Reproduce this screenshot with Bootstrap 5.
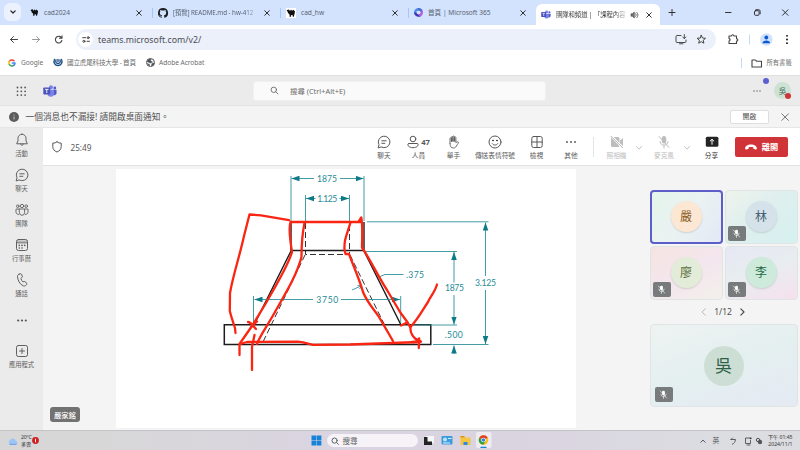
<!DOCTYPE html>
<html lang="zh-Hant">
<head>
<meta charset="utf-8">
<meta name="viewport" content="width=device-width, initial-scale=1">
<title>Microsoft Teams</title>
<link href="https://cdn.jsdelivr.net/npm/bootstrap@5.3.0/dist/css/bootstrap.min.css" rel="stylesheet">
<style>
body{width:800px;height:450px;overflow:hidden;font-family:"Noto Sans","Noto Sans CJK TC",sans-serif;font-size:6.6px;line-height:10px;color:#505050;background:#fff;white-space:nowrap}
svg{display:block;flex:none;overflow:visible}
.ln{fill:none;stroke:currentColor;stroke-linecap:round;stroke-linejoin:round}
.fx{flex:none}
.tabstrip{height:25px;background:#d3e2fd}
.tabdrop{width:17px;height:18px;margin:3px 2px 0 4px;border-radius:6px;background:#ebf2fe;color:#222}
.btab{width:128px;height:25px;padding-left:7px;border-right:1px solid transparent;color:#596273}
.btab .ttl{width:84px;margin-left:5px}
.btab .ttl.tight{font-size:6.25px;letter-spacing:-.05px}
.btab .tx{margin-left:7px;color:#333}
.tsep{width:1px;height:10px;background:#a5c7f7;margin-left:9px}
.fade-r{-webkit-mask-image:linear-gradient(90deg,#000 85%,#0003);mask-image:linear-gradient(90deg,#000 85%,#0003)}
.btab.on{width:124px;height:21px;margin:4px 0 0 1px;padding-left:5px;background:#fff;border-radius:6px 6px 0 0;color:#444}
.btab.on .ttl{width:70px;font-size:6.4px;letter-spacing:-.1px}
.tbar{height:29px;color:#444}
.urlbar{width:640px;height:21px;margin-left:8px;border-radius:11px;background:#ebf0fa}
.urlchip{width:15px;height:15px;border-radius:50%;background:#fff;margin-left:2px}
.urltx{font-size:8.8px;margin-left:5px;color:#4b4f54;width:572px}
.bmarks{height:21px;color:#6c6c6c}
.thead{height:31px;background:#ebebeb;border-top:1px solid #e0e0e0;border-bottom:1px solid #e2e2e2}
.sbox{width:293px;height:20px;background:#fafafa;border-radius:3px;border:1px solid #f0f0f0;font-size:7.4px;color:#6c6c6c}
.note{height:22px;background:#f4f4f4;border-bottom:1px solid #e6e6e6;font-size:8.7px;color:#505050}
.openb{width:39px;height:14px;background:#fff;border:1px solid #dedede;border-radius:2px;font-size:6.9px}
.rail{width:43px;background:#ebebeb;color:#606060;font-size:6.3px}
.rail .ri{height:35px;padding-top:5px}
.rail .rl{line-height:9px;margin-top:2px}
.mbar{height:38px;background:#fff;border-bottom:1px solid #e2e2e2;color:#585858}
.mi{height:38px;padding-top:7px}
.mi .ic{height:14px}
.mi .lb{line-height:9px;margin-top:2px;font-size:6.7px}
.off{color:#bdbdbd}
.leave{width:53px;height:20px;background:#d13438;border-radius:2px;color:#fff;font-weight:700;font-size:8.2px}
.stage{background:#f4f4f4}
.slide{width:460px;height:259px;background:#fff;margin-top:3px}
.speaker{width:30px;height:15px;margin:241px 36px 0 7px;background:#727272;border-radius:3px;color:#fff;font-weight:500;font-size:7.3px}
.people{width:148px;margin:23.5px 0 0 73.5px}
.tile{width:73px;height:54px;border:1px solid #dfe5e5;border-radius:4px;position:relative}
.av{border-radius:50%;width:31px;height:31px;font-size:12px;box-shadow:0 1px 2px #0002}
.mic{position:absolute;left:2px;bottom:2px;width:18px;height:15px;background:#777b7b;border-radius:2px;color:#fff}
.t1{background:linear-gradient(125deg,#e4f5ec,#ebf2f2 50%,#e3e9f6);border:2px solid #5b5fc7}
.t2{background:linear-gradient(140deg,#eff3ec,#deefee 45%,#d6f1f1)}
.t3{background:linear-gradient(150deg,#f5e4e0,#f3e6ee 50%,#f3f0ea)}
.t4{background:linear-gradient(160deg,#e6e7f4,#e8edf0 45%,#f5e1ee)}
.t5{width:148px;height:83px;background:linear-gradient(160deg,#eef3f1,#e4eff0 50%,#e5eaf3)}
.t5 .mic{left:4px;bottom:4px}
.tkbar{height:20px;border-top:1px solid #c4c4c8;background:linear-gradient(90deg,#d7d7d7 10%,#dad4e2 45%,#dad4e0 65%,#dbdde1 90%)}
.tksearch{width:91px;height:13px;border-radius:7px;background:#f5f2f8;font-size:7.6px;color:#606060}
.dot-n{position:absolute;border-radius:50%;width:6px;height:6px}
.tiny{font-size:5.1px;line-height:7px;color:#333}
</style>
<script src="https://cdn.jsdelivr.net/npm/bootstrap@5.3.0/dist/js/bootstrap.bundle.min.js"></script>
</head>
<body class="d-flex flex-column">
<svg width="0" height="0" class="position-absolute">
<symbol id="x" viewBox="0 0 8 8"><path class="ln" d="M1.700 1.700l4.600 4.600M6.300 1.700L1.700 6.300"/></symbol>
<symbol id="camel" viewBox="0 0 10 10"><path d="M1 2l2-.6L4 3l1-1.600 1 1.300 1.400-1L9 3.500 8.500 6l-.7 2.700h-1L6.500 7 5 7.200 4.700 9h-1L3.500 6.500 2 5 1.600 3.500.8 3z" fill="#111"/></symbol>
<symbol id="teams" viewBox="0 0 14 12"><circle cx="8" cy="2.300" r="2" fill="#7b83eb"/><circle cx="11.800" cy="3" r="1.400" fill="#5059c9"/><path d="M10 4.800h3.500v3.400a2.200 2.200 0 0 1-3.500 1.500z" fill="#5059c9"/><path d="M4.500 4.800h6.500v3.700a3.200 3.200 0 0 1-6.500 0z" fill="#7b83eb"/><rect x=".3" y="2.500" width="7" height="7" rx=".8" fill="#4b53bc"/><path d="M2.100 4.400h3.400M3.800 4.400v3.700" stroke="#fff" stroke-width=".9"/></symbol>
<symbol id="micoff" viewBox="0 0 14 14"><rect x="4.800" y="1" width="4.400" height="7.500" rx="2.200" fill="currentColor"/><path class="ln" d="M3 6.500c0 5 8 5 8 0M7 10.300V13M2 1.500l10 11" stroke-width="1"/></symbol>
<symbol id="chat" viewBox="0 0 14 14"><path class="ln" d="M1.200 12.600l.8-2.900A5.800 5.800 0 1 1 4.400 12.100zM4.800 5.800h4.400M4.800 8.300h3" stroke-width="1"/></symbol>
</svg>

<div class="tabstrip d-flex align-items-center fx">
  <div class="tabdrop fx d-flex align-items-center justify-content-center align-self-start"><svg width="6" height="4"><path class="ln" d="M.8.8L3 3 5.200.8" stroke-width="1.200"/></svg></div>
  <div class="btab d-flex align-items-center fx"><svg width="9" height="9"><use href="#camel"/></svg><div class="ttl fx">cad2024</div><svg class="tx" width="8" height="8"><use href="#x"/></svg><div class="tsep fx"></div></div>
  <div class="btab d-flex align-items-center fx"><svg width="10" height="10" viewBox="0 0 16 16"><path fill="#1b1f24" d="M8 0a8 8 0 0 0-2.500 15.600c.4.1.5-.2.500-.4v-1.500c-2 .4-2.600-.5-2.800-1-.1-.2-.5-.9-.8-1.100-.3-.2-.7-.5 0-.5.600 0 1.100.6 1.200.8.700 1.200 1.900.9 2.400.7.100-.5.300-.9.500-1.100-1.800-.2-3.600-.9-3.600-4 0-.9.300-1.600.8-2.100-.1-.2-.4-1 .1-2.100 0 0 .7-.2 2.200.8a7.600 7.600 0 0 1 4 0c1.500-1 2.200-.8 2.200-.8.400 1.100.2 1.900.1 2.100.5.600.8 1.300.8 2.100 0 3.100-1.900 3.800-3.700 4 .3.300.6.7.6 1.500v2.200c0 .2.100.5.600.4A8 8 0 0 0 8 0z"/></svg><div class="ttl tight fade-r fx">[預覽] README.md - hw-412</div><svg class="tx" width="8" height="8" style="margin-left:6px"><use href="#x"/></svg><div class="tsep fx"></div></div>
  <div class="btab d-flex align-items-center fx"><svg width="10" height="10"><rect width="10" height="10" fill="#fff"/><use href="#camel"/></svg><div class="ttl fx">cad_hw</div><svg class="tx" width="8" height="8" style="margin-left:6px"><use href="#x"/></svg><div class="tsep fx"></div></div>
  <div class="btab d-flex align-items-center fx"><svg width="9" height="9"><path class="ln" d="M4.500 1.200A3.300 3.300 0 0 0 1.300 5.500" style="stroke:#4a8fe8" stroke-width="2.400"/><path class="ln" style="stroke:#4536b8" stroke-width="2.400" d="M1.500 5.500a3.300 3.300 0 0 0 4.500 1.800"/><path class="ln" style="stroke:#b45fe0" stroke-width="2.400" d="M6.200 7.200a3.300 3.300 0 0 0 1-4.800"/><path class="ln" style="stroke:#4b6cd8" stroke-width="2.400" d="M7 2.300a3.300 3.300 0 0 0-2.300-1"/></svg><div class="ttl fx">首頁 | Microsoft 365</div><svg class="tx" width="8" height="8"><use href="#x"/></svg></div>
  <div class="btab on d-flex align-items-center fx"><svg width="10" height="9"><use href="#teams"/></svg><div class="ttl fade-r fx">團隊和頻道 | 「課程內容</div><svg width="9" height="8" style="margin-left:4px"><path d="M1 2.800h1.300L4.300 1v6L2.300 5.200H1z" fill="#777" stroke="#444" stroke-width=".6"/><path class="ln" d="M5.600 2.600c.8.800.8 2 0 2.800M6.600 1.200c1.800 1.500 1.800 4.100 0 5.600" stroke-width=".8"/></svg><svg class="tx" width="8" height="8" style="margin-left:6px"><use href="#x"/></svg></div>
  <svg width="140" height="25" viewBox="660 0 140 25" style="color:#333"><path class="ln" d="M669 12.500h6M672 9.500v6M725.500 12.500h5.500M782.500 9.800l5.500 5.500M788 9.800l-5.500 5.500"/><rect x="754.500" y="10.700" width="4.600" height="4.600" rx="1" class="ln"/><path class="ln" d="M756 9.600h2.500a1.700 1.700 0 0 1 1.700 1.700v2.500" stroke-width=".9"/></svg>
</div>

<div class="tbar d-flex align-items-center fx">
  <svg width="68" height="29" viewBox="0 25 68 29"><path class="ln" d="M10.500 39.500h7M13.500 36.500l-3 3 3 3"/><path class="ln" style="stroke:#999" d="M32.500 39.500h7M36.500 36.500l3 3-3 3"/><path class="ln" d="M61.600 38a3.300 3.300 0 1 0 .3 2.500M62 35.800v2.500h-2.500" stroke-width="1.100"/></svg>
  <div class="urlbar d-flex align-items-center fx">
    <div class="urlchip fx d-flex align-items-center justify-content-center"><svg width="8" height="7"><path class="ln" d="M.7 1.700h3M5 5.300h2.500"/><circle class="ln" cx="6.200" cy="1.700" r="1"/><circle class="ln" cx="1.900" cy="5.300" r="1"/></svg></div>
    <div class="urltx fx">teams.microsoft.com/v2/</div>
    <svg width="38" height="13" viewBox="670 33 38 13"><path class="ln" d="M681 35.500h-4a1 1 0 0 0-1 1v5a1 1 0 0 0 1 1h8a1 1 0 0 0 1-1V40M679.500 43.800h3.500M684.300 34.500v4M682.700 37l1.600 1.600 1.600-1.600" stroke-width=".95"/><path class="ln" d="M701.300 35.300l1.200 2.700 3 .3-2.300 2 .7 2.900-2.600-1.500-2.600 1.500.7-2.900-2.300-2 3-.3z"/></svg>
  </div>
  <svg width="84" height="29" viewBox="716 25 84 29"><path class="ln" d="M729 36h2.500c.2-1.600 2.200-1.600 2.400 0h2.600v2.700c1.800.2 1.800 2.200 0 2.400v2.400H729v-2.400c1.500-.3 1.500-2.200 0-2.500z" stroke-width="1.100"/><path d="M749.500 34.500v10" stroke="#c5daf8"/><circle cx="766.300" cy="39.500" r="6.200" fill="#cfe1fd"/><circle cx="766.300" cy="37.500" r="1.900" fill="#0b57d0"/><path d="M762.500 43.200c0-3.700 7.600-3.700 7.600 0z" fill="#0b57d0"/><circle cx="787" cy="35.800" r=".9"/><circle cx="787" cy="39.500" r=".9"/><circle cx="787" cy="43.200" r=".9"/></svg>
</div>

<div class="bmarks d-flex align-items-center fx pb-1">
  <svg width="8" height="8" viewBox="0 0 8 8" style="margin-left:8px"><g class="ln" stroke-width="1.500"><path style="stroke:#ea4335" d="M1.300 2.500A3 3 0 0 1 6 1.800"/><path style="stroke:#fbbc05" d="M1.300 2.500a3 3 0 0 0 0 3"/><path style="stroke:#34a853" d="M1.500 5.700a3 3 0 0 0 4.300.7"/><path style="stroke:#4285f4" d="M6 6.200c.7-.6 1-1.300 1-2.200H4.300"/></g></svg>
  <div class="fx" style="width:27px;margin-left:5px">Google</div>
  <svg width="10" height="9" style="margin-left:5px;color:#214f87"><path class="ln" d="M1.500 1.500c-1.500 3 .5 6 3.500 6s5-3 3.500-6M3 2c-.8 2 .3 3.500 2 3.500S7.800 4 7 2M5 1.500v2" stroke-width="1.400"/></svg>
  <div class="fx" style="width:73px;margin-left:4px;letter-spacing:-.2px">國立虎尾科技大學 - 首頁</div>
  <svg width="9" height="9" style="margin-left:6px"><circle cx="4.500" cy="4.500" r="4" fill="#fff" stroke="#4d5156"/><path d="M1 3.500L3 1l2 .3-.5 1.400L6.500 4 4.500 5 3 4.500zM5.500 8l.4-2.600L8.200 5 7.800 6.500zM1.500 5.500l2 1-.3 1.600z" fill="#4d5156" stroke="#4d5156" stroke-width=".5"/></svg>
  <div class="fx" style="margin-left:4px;width:582px;letter-spacing:-.04px">Adobe Acrobat</div>
  <svg width="21" height="12" viewBox="741 56 21 12"><path d="M741.500 57v10" stroke="#c5daf8"/><path class="ln" style="stroke:#444" d="M752 66v-7h3.500l1 1.200h5V66z" stroke-width="1.100"/></svg>
  <div class="fx" style="margin-left:4.500px;font-size:6.300px">所有書籤</div>
</div>

<div class="thead d-flex align-items-center fx">
  <svg width="58" height="12" viewBox="0 84 58 12"><g fill="#555"><circle cx="17.500" cy="86.500" r=".9"/><circle cx="21.300" cy="86.500" r=".9"/><circle cx="25.100" cy="86.500" r=".9"/><circle cx="17.500" cy="90.300" r=".9"/><circle cx="21.300" cy="90.300" r=".9"/><circle cx="25.100" cy="90.300" r=".9"/><circle cx="17.500" cy="94.100" r=".9"/><circle cx="21.300" cy="94.100" r=".9"/><circle cx="25.100" cy="94.100" r=".9"/></g><use href="#teams" x="43" y="84" width="14" height="12"/></svg>
  <div class="sbox d-flex align-items-center fx" style="margin-left:195px"><svg width="9" height="9" style="margin:0 11px 0 16px"><circle class="ln" cx="3.800" cy="3.800" r="2.700" stroke-width=".9"/><path class="ln" d="M5.800 5.800L8 8" stroke-width=".9"/></svg><span>搜尋 (Ctrl+Alt+E)</span></div>
  <svg width="10" height="4" style="margin-left:206px"><g fill="#777"><circle cx="2" cy="2" r=".8"/><circle cx="5" cy="2" r=".8"/><circle cx="8" cy="2" r=".8"/></g></svg>
  <div class="position-relative fx d-flex align-items-center justify-content-center rounded-circle" style="width:17px;height:17px;margin-left:12px;background:#cce2d5;color:#466b57;font-size:7.500px">吳<span class="dot-n" style="left:-11px;top:-4px;background:#5b5fd0"></span><span class="dot-n" style="right:0;bottom:0;background:#d13438"></span></div>
</div>

<div class="note d-flex align-items-center fx">
  <svg width="10" height="10" style="margin-left:8.500px"><circle cx="5" cy="5" r="5" fill="#5c5c5c"/><path d="M5 2.500v1M5 4.500v3" stroke="#ddd" stroke-width=".8"/></svg>
  <div class="fx" style="margin-left:7px;width:704.500px">一個消息也不漏接! 請開啟桌面通知。</div>
  <div class="openb fx d-flex align-items-center justify-content-center">開啟</div>
  <svg width="8" height="8" style="margin-left:12px;color:#666"><path class="ln" d="M.8.8l6.600 6.600M7.400.8L.8 7.400" stroke-width=".9"/></svg>
</div>

<div class="d-flex fx" style="height:302px">
  <nav class="rail fx d-flex flex-column text-center">
    <div class="ri d-flex flex-column align-items-center"><svg width="14" height="14"><path class="ln" d="M7 1.200a4 4 0 0 0-4 4v2.600L1.700 10.800h10.600L11 7.800V5.200a4 4 0 0 0-4-4zM5.500 11c.2 1.800 2.800 1.800 3 0"/></svg><div class="rl">活動</div></div>
    <div class="ri d-flex flex-column align-items-center"><svg width="14" height="14"><use href="#chat"/></svg><div class="rl">聊天</div></div>
    <div class="ri d-flex flex-column align-items-center"><svg width="14" height="14"><g class="ln" stroke-width=".9"><circle cx="7" cy="3" r="1.700"/><circle cx="2.800" cy="3.200" r="1.300"/><circle cx="11.200" cy="3.200" r="1.300"/><path d="M4.400 6h5.200v3.700a2.600 2.600 0 0 1-5.200 0zM4.200 6H1v3.200c0 1.300 1.200 2.300 2.600 2.200M9.800 6H13v3.200c0 1.300-1.200 2.300-2.600 2.200"/></g></svg><div class="rl">團隊</div></div>
    <div class="ri d-flex flex-column align-items-center"><svg width="14" height="14"><path d="M1.500 2.500h11v2.300h-11z" fill="#b5b5b5"/><rect class="ln" x="1.500" y="1.500" width="11" height="11" rx="2"/><path class="ln" d="M1.500 4.900h11" stroke-width=".8"/><g fill="#555"><circle cx="4.300" cy="7.400" r=".8"/><circle cx="7" cy="7.400" r=".8"/><circle cx="9.700" cy="7.400" r=".8"/><circle cx="4.300" cy="10" r=".8"/><circle cx="7" cy="10" r=".8"/></g></svg><div class="rl">行事曆</div></div>
    <div class="ri d-flex flex-column align-items-center"><svg width="14" height="14"><path class="ln" d="M4 1.200l1.500-.4c.7-.1 1 .3 1.200.8l.6 1.600c.2.600 0 1-.4 1.400l-1 .9c.2 1.200 1 2.500 2 3.400l1.400-.4c.6-.1 1 .1 1.300.5l1 1.300c.3.500.3 1-.1 1.400l-.9.900c-.6.500-1.400.6-2.200.3C4.800 11.400 2.600 7.300 2.500 3.200c0-.9.6-1.700 1.500-2z"/></svg><div class="rl">通話</div></div>
    <div class="ri d-flex flex-column align-items-center" style="padding-top:15px"><svg width="12" height="5"><g fill="#555"><circle cx="2.200" cy="2.500" r="1.100"/><circle cx="6" cy="2.500" r="1.100"/><circle cx="9.800" cy="2.500" r="1.100"/></g></svg></div>
    <div class="ri d-flex flex-column align-items-center" style="padding-top:6px"><svg width="14" height="14"><rect class="ln" x="1.500" y="1.500" width="11" height="11" rx="1.800"/><path class="ln" d="M4.500 7h5M7 4.500v5"/></svg><div class="rl">應用程式</div></div>
  </nav>
  <div class="d-flex flex-column flex-grow-1">
    <div class="mbar d-flex fx text-center">
      <svg width="10" height="12" style="margin:13px 0 0 9px"><path class="ln" d="M5 .8c1.200 1 2.500 1.300 4.200 1.300v3.500c0 2.700-1.600 4.400-4.200 5.400C2.400 10 .8 8.300.8 5.600V2.100C2.500 2.100 3.800 1.800 5 .8z"/></svg>
      <div class="fx text-start" style="width:296.500px;margin:15px 0 0 8.500px;font-size:8.200px">25:49</div>
      <div class="mi fx" style="width:34px"><div class="ic"><svg class="mx-auto" width="14" height="14"><use href="#chat"/></svg></div><div class="lb">聊天</div></div>
      <div class="mi fx" style="width:35px"><div class="ic d-flex justify-content-center align-items-center"><svg width="12" height="14"><circle class="ln" cx="6" cy="4" r="2.800"/><path class="ln" d="M2 8.500h8c1.500 0 1.300 1.500.7 2.400-1.800 2.400-7.600 2.400-9.400 0C.7 10 .5 8.500 2 8.500z"/></svg><b style="font-size:7.600px;margin-left:2px">47</b></div><div class="lb">人員</div></div>
      <div class="mi fx" style="width:35px"><div class="ic"><svg class="mx-auto" width="14" height="14"><path d="M4.400 3.500h4.500v3.500h-4.500z" fill="#ccc"/><path class="ln" d="M3 8.500V3.600c0-1.100 1.400-1.100 1.400 0V6.500M4.400 6.300V2.300c0-1.100 1.500-1.100 1.500 0V6M5.900 5.800V1.800c0-1.100 1.500-1.100 1.500 0V6M7.400 6V2.600c0-1.100 1.500-1.100 1.500 0v5.200c.7-1 2.200-1.300 2.700-.5.300.6-.8 1.200-1.500 2.500C9.300 11.500 8.500 13 6.500 13 4 13 3 11.500 3 8.500" stroke-width=".85"/></svg></div><div class="lb">舉手</div></div>
      <div class="mi fx" style="width:48px"><div class="ic"><svg class="mx-auto" width="14" height="14"><circle class="ln" cx="7" cy="7" r="6"/><circle cx="5" cy="5.500" r=".8"/><circle cx="9" cy="5.500" r=".8"/><path class="ln" d="M4.300 8.700c1.300 1.900 4.100 1.900 5.400 0"/></svg></div><div class="lb">傳送表情符號</div></div>
      <div class="mi fx" style="width:35px"><div class="ic"><svg class="mx-auto" width="14" height="14"><rect class="ln" x="1.800" y="1.500" width="10.400" height="11" rx="1.800"/><path class="ln" d="M7 1.500v11M1.800 7h10.400"/></svg></div><div class="lb">檢視</div></div>
      <div class="mi fx" style="width:34px"><div class="ic"><svg class="mx-auto" width="14" height="14"><g fill="#555"><circle cx="3" cy="7" r=".95"/><circle cx="7" cy="7" r=".95"/><circle cx="11" cy="7" r=".95"/></g></svg></div><div class="lb">其他</div></div>
      <div class="fx" style="width:1px;height:20px;background:#e4e4e4;margin:9px 8px 0 5px"></div>
      <div class="mi off fx" style="width:29px"><div class="ic"><svg class="mx-auto" width="14" height="14"><rect x="1" y="2" width="8.500" height="10" rx="1.500" fill="#bdbdbd"/><path d="M10 5.500l3-2.500v8l-3-2.500z" fill="#bdbdbd"/><path d="M1 .8l12 12.400" stroke="#fff" stroke-width="2.200"/><path d="M.8 1l12 12" stroke="#aaa" stroke-width=".9"/></svg></div><div class="lb">照相機</div></div>
      <svg class="off" width="6" height="4" style="margin:18px 5px 0 5px"><path class="ln" d="M.5.5L3 3.200 5.500.5" stroke-width=".9"/></svg>
      <div class="mi off fx" style="width:30px;margin-left:2px"><div class="ic"><svg class="mx-auto" width="14" height="14"><use href="#micoff"/></svg></div><div class="lb">麥克風</div></div>
      <svg class="off" width="6" height="4" style="margin:18px 5px 0 5px"><path class="ln" d="M.5.5L3 3.200 5.500.5" stroke-width=".9"/></svg>
      <div class="mi fx" style="width:29px;margin-left:2px;color:#333"><div class="ic"><svg class="mx-auto" width="14" height="14"><rect x=".8" y="1.800" width="12.600" height="10" rx="1.500" fill="#242424"/><path class="ln" style="stroke:#fff" d="M7 9.300V4.500M5.200 6L7 4.300 8.800 6"/></svg></div><div class="lb">分享</div></div>
      <div class="leave fx d-flex align-items-center justify-content-center" style="margin:9px 0 0 9px"><svg width="12" height="6" style="margin-right:5px"><path d="M6 .5C2.600.5.200 2.200.2 4.200c0 1 .3 1.400 1 1.300l1.800-.4c.5-.1.700-.4.700-.9V3.300c1.300-.5 3.300-.5 4.600 0v.9c0 .5.200.8.700.9l1.800.4c.7.1 1-.3 1-1.300C11.800 2.200 9.400.5 6 .5z" fill="#fff"/></svg>離開</div>
    </div>
    <main class="stage d-flex flex-grow-1 align-items-start">
      <div class="speaker fx d-flex align-items-center justify-content-center">嚴家銘</div>
      <div class="slide fx">
        <svg width="460" height="259" viewBox="116 169 460 259">
          <defs><marker id="ar" viewBox="0 0 8 6" refX="8" refY="3" markerWidth="8" markerHeight="6" markerUnits="userSpaceOnUse" orient="auto"><path d="M0 .2L8 3 0 5.800z" fill="#0c7b87"/></marker></defs>
          <g fill="none" stroke="#1c1c1c">
            <path d="M224.300 324.800H430.800V344.500H224.300z" stroke-width="1.500"/>
            <path d="M291 222V250.500H364V222M291 251L254 325M364 251L401 325" stroke-width="1.400"/>
            <path d="M305.500 223V254.500H349.500V223M305 255L262 344M350 255L394 344" stroke-width=".9" stroke-dasharray="6 3"/>
          </g>
          <g fill="none" stroke="#2f919b" stroke-width=".9">
            <path d="M291 176V221M364 176V221M305.500 195V221M349.500 195V221M253.500 296V323M400.700 296V323M367 221.800H488.500M366 251.500H457M413 325H457M433 344.500H488.500"/>
            <path d="M403.500 274.500H385L380 276.500M352 290L362 285.500M357.500 285.500L361.500 285.800L359.500 289"/>
            <path marker-end="url(#ar)" d="M314 178.500H291.500"/><path marker-end="url(#ar)" d="M340 178.500H363.500"/>
            <path marker-end="url(#ar)" d="M315.500 198.500H306"/><path marker-end="url(#ar)" d="M339.500 198.500H349"/>
            <path marker-end="url(#ar)" d="M313 299.500H254.500"/><path marker-end="url(#ar)" d="M341 299.500H400"/>
            <path marker-end="url(#ar)" d="M454 282.500V252"/><path marker-end="url(#ar)" d="M454 295V324.500"/>
            <path marker-end="url(#ar)" d="M485.500 276V222.500"/><path marker-end="url(#ar)" d="M485.500 290V344"/>
            <path marker-end="url(#ar)" d="M454 354V345.500"/>
          </g>
          <g fill="#268a95" font-family="Lato, sans-serif" font-size="8.600" text-anchor="middle">
            <text x="327" y="181.600" textLength="20">1875</text><text x="327.300" y="201.600" textLength="20">1.125</text><text x="327.300" y="302.600" textLength="22">3750</text>
            <text x="415" y="277.600" textLength="18">.375</text><text x="454.500" y="291.400" textLength="19">1875</text><text x="485.500" y="286" textLength="21">3.125</text><text x="453.700" y="338" textLength="18">.500</text>
          </g>
          <g fill="none" stroke="#fa2513" stroke-width="2.300" stroke-linecap="round" stroke-linejoin="round">
            <path d="M235.500 333L235 328C233 322 231 316 229.800 311L230 293C233 275 240 255 244 236L249.500 214.500L261 215.300L289 220.200"/>
            <path d="M291 222H361M290.500 222C288.500 228 290 240 292 252C288 266 275 287 266 303L252 326L239.500 344V355"/>
            <path d="M304.500 223C302 235 301.500 246 301.500 257C296 277 285 294 275.500 311C268 325 260 335 257 344"/>
            <path d="M248 322C251 322 253 326 256 329M257 321.500L251 327M254.500 335L252 347V370"/>
            <path d="M240 344L247 342L298 341.700L303 342.300L313 344.800L350 344.500L420 342"/>
            <path d="M350.500 222.500C346 237 344 240 344.500 250L345.500 254H349C355 270 360 281 363 292C368 304 374 309 379 317L393 341"/>
            <path d="M359 221L361.300 217.500C363 228 362 239 362 247.500C370 259 379 278 387 290L400 312L408 323L410.500 328C410 333 414 338 418 341M401 325.500L407 322.500"/>
            <path d="M437 284.500C435 292 430 297 428 302C422 311 418 319 410.500 327M419.200 338.500L418.800 348M412 342L421 341.500L416 339"/>
          </g>
        </svg>
      </div>
      <aside class="people fx">
        <div class="d-flex flex-wrap" style="gap:2px">
          <div class="tile t1 d-flex align-items-center justify-content-center"><div class="av d-flex align-items-center justify-content-center" style="background:#fbe7d3;color:#8a5a1e">嚴</div></div>
          <div class="tile t2 d-flex align-items-center justify-content-center"><div class="av d-flex align-items-center justify-content-center" style="background:#d6e2ea;color:#42606e">林</div><div class="mic d-flex align-items-center justify-content-center"><svg width="9" height="9" viewBox="0 0 9 9"><use href="#micoff"/></svg></div></div>
          <div class="tile t3 d-flex align-items-center justify-content-center"><div class="av d-flex align-items-center justify-content-center" style="background:#e3ecd9;color:#5c6e3c">廖</div><div class="mic d-flex align-items-center justify-content-center"><svg width="9" height="9" viewBox="0 0 9 9"><use href="#micoff"/></svg></div></div>
          <div class="tile t4 d-flex align-items-center justify-content-center"><div class="av d-flex align-items-center justify-content-center" style="background:#cdeadb;color:#1f6a45">李</div><div class="mic d-flex align-items-center justify-content-center"><svg width="9" height="9" viewBox="0 0 9 9"><use href="#micoff"/></svg></div></div>
        </div>
        <div class="d-flex align-items-center justify-content-center" style="height:24.500px;font-size:8.500px;gap:8px;padding-right:1px"><svg width="5" height="8" style="color:#bbb"><path class="ln" d="M4.200.8L1 4l3.200 3.200"/></svg><span>1/12</span><svg width="5" height="8"><path class="ln" d="M.8.8L4 4 .8 7.200" stroke-width="1.200"/></svg></div>
        <div class="tile t5 d-flex align-items-center justify-content-center"><div class="av d-flex align-items-center justify-content-center" style="width:40px;height:40px;font-size:17px;background:#cddfd5;color:#2f5e47;box-shadow:none">吳</div><div class="mic d-flex align-items-center justify-content-center"><svg width="9" height="9" viewBox="0 0 9 9"><use href="#micoff"/></svg></div></div>
      </aside>
    </main>
  </div>
</div>

<footer class="tkbar d-flex align-items-center fx">
  <svg width="12" height="8" style="margin-left:7px"><path d="M3 7.300a2.400 2.400 0 0 1 .2-4.300 3 3 0 0 1 5.500.8 1.900 1.900 0 0 1 .8 3.500z" fill="#9cc4f5"/><path d="M2.500 7.400h7" stroke="#6d9fe8"/></svg>
  <div class="tiny fx" style="width:12px;margin-left:2px;letter-spacing:-.2px">20°C<br>多雲</div>
  <svg width="7" height="7" style="margin-left:-1px"><circle cx="3.500" cy="3.500" r="3.400" fill="#cf1f1f"/><path d="M3.500 1.700v3.600" stroke="#fff" stroke-width=".9"/></svg>
  <svg width="11" height="11" style="margin-left:272px"><g fill="#1683d8"><path d="M.5.5h4.700v4.700H.5zM5.700.5h4.700v4.700H5.700zM.5 5.700h4.700v4.700H.5zM5.700 5.700h4.700v4.700H5.700z"/></g></svg>
  <div class="tksearch fx d-flex align-items-center" style="margin-left:4.500px"><svg width="8" height="8" style="margin:0 4px"><circle class="ln" cx="3.600" cy="3.600" r="2.600"/><path class="ln" d="M5.600 5.600l1.800 1.800"/></svg>搜尋</div>
  <svg width="75" height="19" viewBox="418 431 75 19"><rect x="476" y="432" width="15.500" height="16" rx="2" fill="#efebf3"/><rect x="426" y="436" width="8" height="7" fill="#f5f5f5"/><path d="M424 437h3.500v4.500h4.500v3.500h-8z" fill="#242424"/><rect x="441.500" y="436" width="11" height="8.500" rx="1" fill="#3d9be0"/><circle cx="445" cy="439.500" r="2" fill="#bfe3fa"/><path d="M448 438.500h3.500M443 443h7" stroke="#d8effc"/><path d="M460.500 436h3.500l1.200 1.500h5.300v7.500h-10z" fill="#f6c544"/><path d="M460.500 436h3.500l1 1.500h-4.500z" fill="#d9961a"/><path d="M463.500 445v-3h4v3z" fill="#2b8ae0"/><circle cx="483.500" cy="440" r="4.800" fill="#fbc116"/><path d="M483.500 440L479.300 437.700A4.800 4.800 0 0 1 487.700 437.700z" fill="#e33b2e"/><path d="M479.300 437.700A4.800 4.800 0 0 0 483.300 444.800L485.500 441.200 483.500 440z" fill="#2ea14b"/><circle cx="483.500" cy="440" r="2.300" fill="#fff"/><circle cx="483.500" cy="440" r="1.700" fill="#3a7de8"/><path d="M481 447.400h5" stroke="#1683d8" stroke-width="1.200" stroke-linecap="round"/></svg>
  <svg width="6" height="4" style="margin-left:207.500px"><path class="ln" d="M.8 3.300L3 1l2.200 2.300" stroke-width=".9"/></svg>
  <div class="fx" style="margin-left:6.500px;width:8px;font-size:6.800px">英</div>
  <svg width="42" height="12" viewBox="721 434 42 12"><path class="ln" d="M731 438.500h4.500c-.2 2.300-1.300 4-3.200 4.700M731 438.500l1.500-1.500" stroke-width=".9"/><path class="ln" d="M750 437h-4.500v5.500h5v-3M747 444h3" stroke-width=".9"/><circle cx="750.700" cy="437.300" r=".9" fill="#333"/><circle class="ln" cx="758" cy="439" r="1.700"/><circle cx="760" cy="441" r="2.200" fill="#555"/></svg>
  <div class="tiny fx text-end" style="width:30px">下午 01:45<br>2024/11/1</div>
</footer>
</body>
</html>
